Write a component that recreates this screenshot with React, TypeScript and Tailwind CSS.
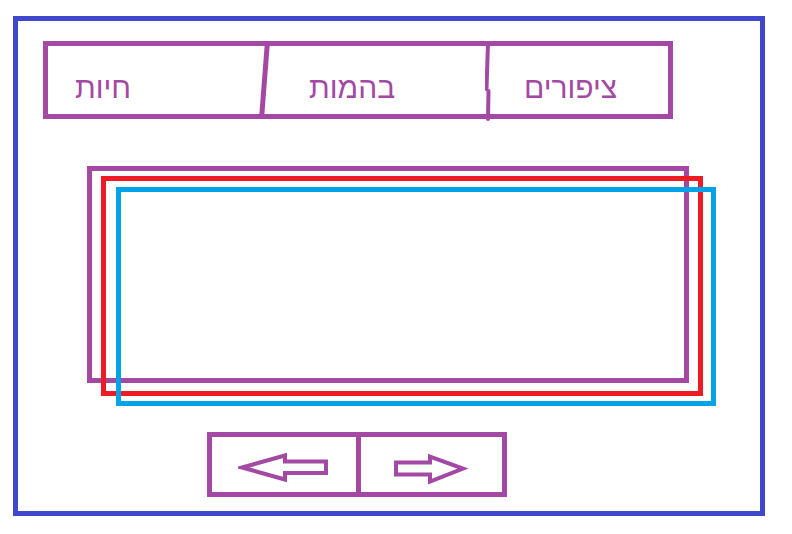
const purple = '#a349a4'

function LeftArrow() {
  return (
    <svg width="96" height="40" viewBox="0 0 96 40" className="block">
      <polygon
        points="47,16.5 88,16.5 88,28 47,28 47,34.5 4,22.5 47,10.5"
        fill="white"
        stroke={purple}
        strokeWidth="4"
        strokeLinejoin="miter"
      />
    </svg>
  )
}

function RightArrow() {
  return (
    <svg width="84" height="40" viewBox="0 0 84 40" className="block">
      <polygon
        points="10,17.5 44,17.5 44,11.5 77,23.5 44,36.5 44,29.5 10,29.5"
        fill="white"
        stroke={purple}
        strokeWidth="4"
        strokeLinejoin="miter"
      />
    </svg>
  )
}

export default function App() {
  return (
    <div
      className="w-[792px] h-[534px] bg-white pt-[16px] pl-[13px] overflow-hidden"
      style={{ fontFamily: '"Liberation Sans", "DejaVu Sans", sans-serif' }}
    >
      <div className="w-[752px] h-[500px] border-[5px] border-[#3f48cc] pl-[25px] pt-[20px]">
        {/* Tabs */}
        <div className="flex w-[630px] h-[78px] border-[5px] border-[#a349a4] text-[#a349a4] text-[30px] leading-none">
          <div className="w-[214px] pl-[27px] pt-[27px]">חיות</div>
          <div className="w-[5px] h-[78px] -mt-[5px] bg-[#a349a4] rotate-[4.4deg]" />
          <div className="w-[218px] pl-[42px] pt-[27px]">בהמות</div>
          <svg width="6" height="80" viewBox="0 0 6 80" className="-mt-[5px] block shrink-0">
            <path d="M3 2 L1.5 48 M3.5 50 L3 78" stroke={purple} strokeWidth="4" strokeLinecap="round" fill="none" />
          </svg>
          <div className="flex-1 pl-[33px] pt-[27px]">ציפורים</div>
        </div>

        {/* Stacked content cards */}
        <div className="grid ml-[44px] mt-[47px]">
          <div className="col-start-1 row-start-1 w-[602px] h-[217px] border-[5px] border-[#a349a4]" />
          <div className="col-start-1 row-start-1 ml-[14px] mt-[10px] w-[602px] h-[220px] border-[5px] border-[#ed1c24]" />
          <div className="col-start-1 row-start-1 ml-[29px] mt-[21px] w-[600px] h-[219px] border-[5px] border-[#00a2e8]" />
        </div>

        {/* Prev / next */}
        <div className="flex ml-[164px] mt-[26px] w-[300px] h-[65px] border-[5px] border-[#a349a4]">
          <div className="w-[144px] flex items-center pl-[26px]">
            <LeftArrow />
          </div>
          <div className="w-[5px] bg-[#a349a4]" />
          <div className="flex-1 flex items-center pl-[25px]">
            <RightArrow />
          </div>
        </div>
      </div>
    </div>
  )
}
